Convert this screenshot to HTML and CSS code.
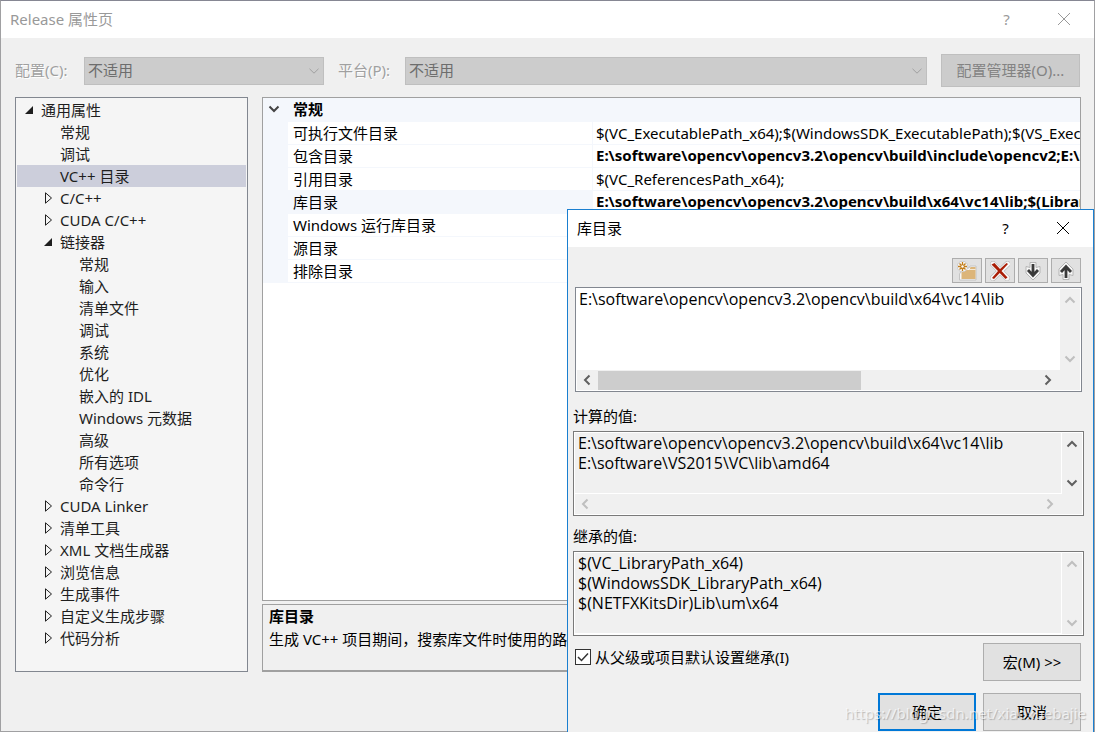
FILE: index.html
```html
<!DOCTYPE html>
<html lang="zh-CN">
<head>
<meta charset="utf-8">
<title>Release 属性页</title>
<link rel="stylesheet" href="styles.css">
</head>
<body>
<svg class="defs" aria-hidden="true">
  <defs>
    <symbol id="open" viewBox="0 0 10 10"><path d="M9 1v8H1z" fill="#1e1e1e"/></symbol>
    <symbol id="closed" viewBox="0 0 10 12"><path d="M2.500 .800v10.400l6-5.200z" fill="none" stroke="#1e1e1e"/></symbol>
    <symbol id="chev" viewBox="0 0 12 12"><path d="M1.500 3.800 6 8.200l4.500-4.400" fill="none" stroke="currentColor"/></symbol>
    <symbol id="up" viewBox="0 0 12 12"><path d="M1.500 8.500 6 4l4.500 4.500" fill="none" stroke="currentColor" stroke-width="2"/></symbol>
    <symbol id="down" viewBox="0 0 12 12"><path d="M1.500 3.500 6 8l4.500-4.500" fill="none" stroke="currentColor" stroke-width="2"/></symbol>
    <symbol id="left" viewBox="0 0 12 12"><path d="M8.500 1.500 4 6l4.500 4.500" fill="none" stroke="currentColor" stroke-width="2"/></symbol>
    <symbol id="right" viewBox="0 0 12 12"><path d="M3.500 1.500 8 6l-4.500 4.500" fill="none" stroke="currentColor" stroke-width="2"/></symbol>
    <symbol id="close" viewBox="0 0 14 14"><path d="M1 1l12 12M13 1L1 13" fill="none" stroke="currentColor"/></symbol>
  </defs>
</svg>

<main class="window">
  <header class="titlebar inactive">
    <h1 class="title">Release 属性页</h1>
    <button class="caption" type="button" aria-label="帮助">?</button>
    <button class="caption" type="button" aria-label="关闭"><svg class="i14"><use href="#close"/></svg></button>
  </header>

  <div class="configbar">
    <label class="dim" for="config">配置(C):</label>
    <span class="combo combo-small"><select id="config" disabled><option>不适用</option></select><svg class="i12"><use href="#chev"/></svg></span>
    <label class="dim dim-second" for="platform">平台(P):</label>
    <span class="combo combo-wide"><select id="platform" disabled><option>不适用</option></select><svg class="i12"><use href="#chev"/></svg></span>
    <button class="manager" type="button" disabled>配置管理器(O)...</button>
  </div>

  <div class="content">
    <nav class="tree" aria-label="属性">
      <ul>
        <li><div class="node"><svg class="i10"><use href="#open"/></svg>通用属性</div>
          <ul>
            <li><div class="node leaf">常规</div></li>
            <li><div class="node leaf">调试</div></li>
            <li class="selected"><div class="node leaf">VC++ 目录</div></li>
            <li><div class="node"><svg class="tri"><use href="#closed"/></svg>C/C++</div></li>
            <li><div class="node"><svg class="tri"><use href="#closed"/></svg>CUDA C/C++</div></li>
            <li><div class="node"><svg class="i10"><use href="#open"/></svg>链接器</div>
              <ul>
                <li><div class="node leaf">常规</div></li>
                <li><div class="node leaf">输入</div></li>
                <li><div class="node leaf">清单文件</div></li>
                <li><div class="node leaf">调试</div></li>
                <li><div class="node leaf">系统</div></li>
                <li><div class="node leaf">优化</div></li>
                <li><div class="node leaf">嵌入的 IDL</div></li>
                <li><div class="node leaf">Windows 元数据</div></li>
                <li><div class="node leaf">高级</div></li>
                <li><div class="node leaf">所有选项</div></li>
                <li><div class="node leaf">命令行</div></li>
              </ul>
            </li>
            <li><div class="node"><svg class="tri"><use href="#closed"/></svg>CUDA Linker</div></li>
            <li><div class="node"><svg class="tri"><use href="#closed"/></svg>清单工具</div></li>
            <li><div class="node"><svg class="tri"><use href="#closed"/></svg>XML 文档生成器</div></li>
            <li><div class="node"><svg class="tri"><use href="#closed"/></svg>浏览信息</div></li>
            <li><div class="node"><svg class="tri"><use href="#closed"/></svg>生成事件</div></li>
            <li><div class="node"><svg class="tri"><use href="#closed"/></svg>自定义生成步骤</div></li>
            <li><div class="node"><svg class="tri"><use href="#closed"/></svg>代码分析</div></li>
          </ul>
        </li>
      </ul>
    </nav>

    <section class="details">
      <div class="grid">
        <table>
          <colgroup><col class="c-gutter"><col class="c-name"><col></colgroup>
          <thead><tr><th class="gutter"><svg class="i12 expander"><use href="#down"/></svg></th><th colspan="2">常规</th></tr></thead>
          <tbody>
            <tr><td class="gutter"></td><td>可执行文件目录</td><td>$(VC_ExecutablePath_x64);$(WindowsSDK_ExecutablePath);$(VS_ExecutablePath)</td></tr>
            <tr><td class="gutter"></td><td>包含目录</td><td class="strong">E:\software\opencv\opencv3.2\opencv\build\include\opencv2;E:\software</td></tr>
            <tr><td class="gutter"></td><td>引用目录</td><td>$(VC_ReferencesPath_x64);</td></tr>
            <tr><td class="gutter"></td><td class="current">库目录</td><td class="strong">E:\software\opencv\opencv3.2\opencv\build\x64\vc14\lib;$(LibraryPath)</td></tr>
            <tr><td class="gutter"></td><td>Windows 运行库目录</td><td></td></tr>
            <tr><td class="gutter"></td><td>源目录</td><td></td></tr>
            <tr><td class="gutter"></td><td>排除目录</td><td></td></tr>
          </tbody>
        </table>
      </div>
      <div class="description">
        <h2>库目录</h2>
        <p>生成 VC++ 项目期间，搜索库文件时使用的路径。</p>
      </div>
    </section>
  </div>
</main>

<section class="dialog" role="dialog" aria-labelledby="dialog-title">
  <header class="titlebar">
    <h2 class="title" id="dialog-title">库目录</h2>
    <button class="caption" type="button" aria-label="帮助">?</button>
    <button class="caption" type="button" aria-label="关闭"><svg class="i14"><use href="#close"/></svg></button>
  </header>

  <div class="panel">
    <div class="tools">
      <button type="button" aria-label="新行"><svg class="tool" viewBox="0 0 20 20"><path d="M6 7h6l1-2h6v14H2.500v-6z" fill="#f7f7f7" stroke="#c4c4c4"/><path d="M4.500 9h8l1-3h5v12h-14z" fill="#dcb579"/><path d="M12.500 8.500h6" stroke="#f4ead8"/><circle cx="5.500" cy="5.500" r="5.300" fill="#f7f7f7" stroke="#bdbdbd" stroke-width=".7"/><path d="M5.500 1v9M1 5.500h9M2.500 2.500l6 6M8.500 2.500l-6 6" stroke="#c27d1a" stroke-width="1.300"/><circle cx="5.500" cy="5.500" r="1.200" fill="#fff"/></svg></button>
      <button type="button" aria-label="删除"><svg class="tool" viewBox="0 0 20 20"><path d="M3 3l14 14M17.500 3L3 17" stroke="#b8b8b8" stroke-width="6" stroke-linecap="round"/><path d="M3 3l14 14M17.500 3L3 17" stroke="#f7f7f7" stroke-width="4.800" stroke-linecap="round"/><path d="M1.500 3.500 4.500 2 10 8l6.500-6 1.500 1-6.500 7 6 6.500-2 1.500L9.700 12 4 18l-2-1 6-7z" fill="#aa1e06"/></svg></button>
      <button type="button" aria-label="下移"><svg class="tool" viewBox="0 0 20 20"><path d="M7 1.500h6v5l4-1v6.500L10 19 3 12V5.500l4 1z" fill="#f7f7f7" stroke="#b5b5b5"/><path d="M10 3v12M5 9l5 5.500L15 9" fill="none" stroke="#3a3a3a" stroke-width="2.800"/></svg></button>
      <button type="button" aria-label="上移"><svg class="tool" viewBox="0 0 20 20"><path d="M7 18.500h6v-5l4 1V8L10 1 3 8v6.500l4-1z" fill="#f7f7f7" stroke="#b5b5b5"/><path d="M10 17V5M5 11l5-5.500 5 5.500" fill="none" stroke="#3a3a3a" stroke-width="2.800"/></svg></button>
    </div>

    <div class="edit edit-main">
      <textarea class="text" aria-label="库目录" wrap="off" spellcheck="false">E:\software\opencv\opencv3.2\opencv\build\x64\vc14\lib</textarea>
      <div class="vbar off"><svg class="i12"><use href="#up"/></svg><svg class="i12"><use href="#down"/></svg></div>
      <div class="hbar"><svg class="i12"><use href="#left"/></svg><div class="track"><div class="thumb"></div></div><svg class="i12"><use href="#right"/></svg></div>
    </div>

    <label class="caption-label" for="computed">计算的值:</label>
    <div class="edit edit-read">
      <textarea class="text" id="computed" wrap="off" readonly spellcheck="false">E:\software\opencv\opencv3.2\opencv\build\x64\vc14\lib
E:\software\VS2015\VC\lib\amd64</textarea>
      <div class="vbar"><svg class="i12"><use href="#up"/></svg><svg class="i12"><use href="#down"/></svg></div>
      <div class="hbar off"><svg class="i12"><use href="#left"/></svg><div class="track"></div><svg class="i12"><use href="#right"/></svg></div>
    </div>

    <label class="caption-label" for="inherited">继承的值:</label>
    <div class="edit edit-read">
      <textarea class="text" id="inherited" wrap="off" readonly spellcheck="false">$(VC_LibraryPath_x64)
$(WindowsSDK_LibraryPath_x64)
$(NETFXKitsDir)Lib\um\x64</textarea>
      <div class="vbar off"><svg class="i12"><use href="#up"/></svg><svg class="i12"><use href="#down"/></svg></div>
    </div>

    <div class="inherit">
      <label class="check"><span class="box"><input type="checkbox" checked><svg viewBox="0 0 16 16"><path d="M3 8l3.500 3.500L13 4.500" fill="none" stroke="#333" stroke-width="1.500"/></svg></span>从父级或项目默认设置继承(I)</label>
      <button class="push" type="button">宏(M) &gt;&gt;</button>
    </div>
    <div class="actions">
      <button class="push default" type="button">确定</button>
      <button class="push" type="button">取消</button>
    </div>
  </div>
  <span class="watermark">https://blog.csdn.net/xiaoxuebajie</span>
</section>
</body>
</html>
```

FILE: styles.css
```css
* { box-sizing: border-box; }

body {
  margin: 0;
  height: 100vh;
  overflow: hidden;
  position: relative;
  background: #a4a4a6;
  color: #000;
  font: 15px/20px "Noto Sans", "Noto Sans CJK SC", sans-serif;
}

button, select, textarea, input { font: inherit; color: inherit; margin: 0; }
h1, h2, p, ul { margin: 0; padding: 0; }
ul { list-style: none; }
svg { display: block; flex: none; }

.defs { position: absolute; width: 0; height: 0; }
.i10 { width: 10px; height: 10px; }
.i12 { width: 12px; height: 12px; }
.i14 { width: 14px; height: 14px; }
.tri { width: 10px; height: 12px; }

/* Main window */
.window {
  height: 100%;
  display: flex;
  flex-direction: column;
  background: #f0f0f0;
  border: 1px solid #a0a0a2;
  border-top-color: #868793;
}

.titlebar {
  flex: none;
  height: 37px;
  display: flex;
  align-items: center;
  padding: 0 2px 2px 9px;
  background: #fff;
}
.inactive { color: #999; }
.title { flex: 1; font-size: 15px; font-weight: 400; }
.caption {
  width: 57px;
  height: 30px;
  display: flex;
  align-items: center;
  justify-content: center;
  border: 0;
  padding: 0;
  background: transparent;
}

.configbar {
  display: flex;
  align-items: center;
  padding: 16px 14px 10px;
}
.dim { width: 69px; padding-bottom: 2px; color: #a0a0a0; text-shadow: 1px 1px #fff; }
.dim-second { width: 67px; margin-left: 14px; }
.combo { display: grid; align-items: center; height: 28px; }
.combo-small { width: 240px; }
.combo-wide { flex: 1; }
.combo > * { grid-area: 1 / 1; }
.combo select {
  appearance: none;
  width: 100%;
  height: 28px;
  padding: 0 3px 2px;
  border: 1px solid #bfbfbf;
  border-radius: 0;
  background: #ccc;
  color: #6d6d6d;
  opacity: 1;
}
.combo svg { justify-self: end; margin-right: 4px; color: #a0a0a0; }
.manager {
  width: 139px;
  height: 33px;
  margin-left: 14px;
  padding: 0 0 2px;
  border: 1px solid #bfbfbf;
  background: #ccc;
  color: #838383;
}

.content {
  flex: 1;
  min-height: 0;
  display: flex;
  gap: 14px;
  padding: 0 13px 59px 14px;
}

/* Property tree */
.tree {
  width: 233px;
  padding: 1px;
  border: 1px solid #828790;
  background: #f5f5f5;
  color: #1e1e1e;
}
.node { display: flex; align-items: center; height: 22px; }
.node svg { margin: 0 7px; }
.leaf { padding-left: 24px; }
.tree ul ul .node { margin-left: 19px; }
.tree ul ul ul .node { margin-left: 38px; }
.selected { background: #cccedb; }

/* Property grid */
.details { flex: 1; min-width: 0; display: flex; flex-direction: column; gap: 3px; }
.grid { flex: 1; border: 1px solid #a0a0a0; background: #fff; overflow: hidden; }
.grid table { width: 100%; table-layout: fixed; border-collapse: separate; border-spacing: 0; }
.c-gutter { width: 25px; }
.c-name { width: 304px; }
.grid th { height: 24px; padding: 0 5px 2px; background: #f4f7fc; text-align: left; }
.grid td {
  height: 23px;
  padding: 0 0 0 5px;
  line-height: 22px;
  border-bottom: 1px solid #f4f7fc;
  white-space: nowrap;
  overflow: hidden;
}
.grid td + td + td { padding-left: 3px; border-left: 1px solid #f4f7fc; }
.grid .gutter, .grid .current { background: #f4f7fc; }
.expander { color: #444; }
.grid .strong { font-weight: 700; line-height: 20px; padding-bottom: 2px; }
.description {
  height: 68px;
  padding: 1px 6px;
  border: 1px solid #a0a0a0;
  border-bottom-width: 2px;
  overflow: hidden;
  white-space: nowrap;
}
.description h2 { font-size: 15px; }
.description p { padding-top: 3px; }

/* Editor dialog */
.dialog {
  position: absolute;
  top: 209px;
  left: 567px;
  right: 1px;
  bottom: 0;
  overflow: hidden;
  border: 1px solid #1a7fd0;
  border-bottom: 0;
  background: #f0f0f0;
}
.panel { padding: 11px 9px 0 5px; display: flex; flex-direction: column; }
.tools { display: flex; justify-content: flex-end; gap: 3px; padding: 0 3px 4px; }
.tools button {
  width: 30px;
  height: 25px;
  display: grid;
  place-items: center;
  padding: 0;
  border: 1px solid #adadad;
  background: #e1e1e1;
}
.tool { width: 20px; height: 20px; }

.edit {
  display: grid;
  grid-template: 1fr auto / 1fr 20px;
  padding: 1px;
  border: 1px solid #7a7a7a;
}
.edit-main { height: 105px; margin: 0 2px; background: #fff; border-color: #828790; }
.edit-read { height: 85px; }
.text {
  width: 100%;
  height: 100%;
  padding: 0 2px;
  border: 0;
  outline: 0;
  resize: none;
  overflow: hidden;
  background: transparent;
  font-family: "Open Sans", "Noto Sans CJK SC", sans-serif;
  font-size: 16px;
  line-height: 20px;
}
.edit-read .text { padding-left: 3px; border: solid #fff; border-width: 0 1px 1px 0; }
.edit-read { box-shadow: inset 0 0 0 1px #fff; }
.vbar, .hbar { color: #606060; background: #f0f0f0; display: flex; align-items: center; justify-content: space-between; }
.vbar { flex-direction: column; padding: 5px 0; }
.hbar { grid-column: 1 / 3; height: 20px; padding: 0 26px 0 4px; }
.off { color: #bfbfbf; }
.track { flex: 1; height: 19px; margin: 0 5px; }
.thumb { width: 60%; height: 100%; background: #cdcdcd; }

.caption-label { padding: 15px 0 5px; line-height: 19px; }
.edit-read + .caption-label { padding: 11px 0 5px; }

.inherit { display: flex; justify-content: space-between; align-items: flex-start; padding: 7px 3px 0 2px; }
.check { display: flex; align-items: center; gap: 4px; padding-top: 4px; }
.box { display: grid; width: 16px; height: 16px; }
.box > * { grid-area: 1 / 1; width: 16px; height: 16px; }
.box input { appearance: none; border: 1px solid #333; background: #fff; }
.box svg { z-index: 1; }
.push {
  width: 98px;
  height: 38px;
  padding: 0;
  border: 1px solid #adadad;
  background: #e1e1e1;
}
.default { border: 2px solid #0078d7; }
.actions { display: flex; justify-content: flex-end; gap: 7px; padding: 12px 3px 0; }

.watermark {
  position: absolute;
  right: 7px;
  bottom: 9px;
  font-size: 15px;
  line-height: 20px;
  color: rgba(255, 255, 255, .65);
  text-shadow: 1px 1px 1px rgba(0, 0, 0, .22);
  pointer-events: none;
}
```
